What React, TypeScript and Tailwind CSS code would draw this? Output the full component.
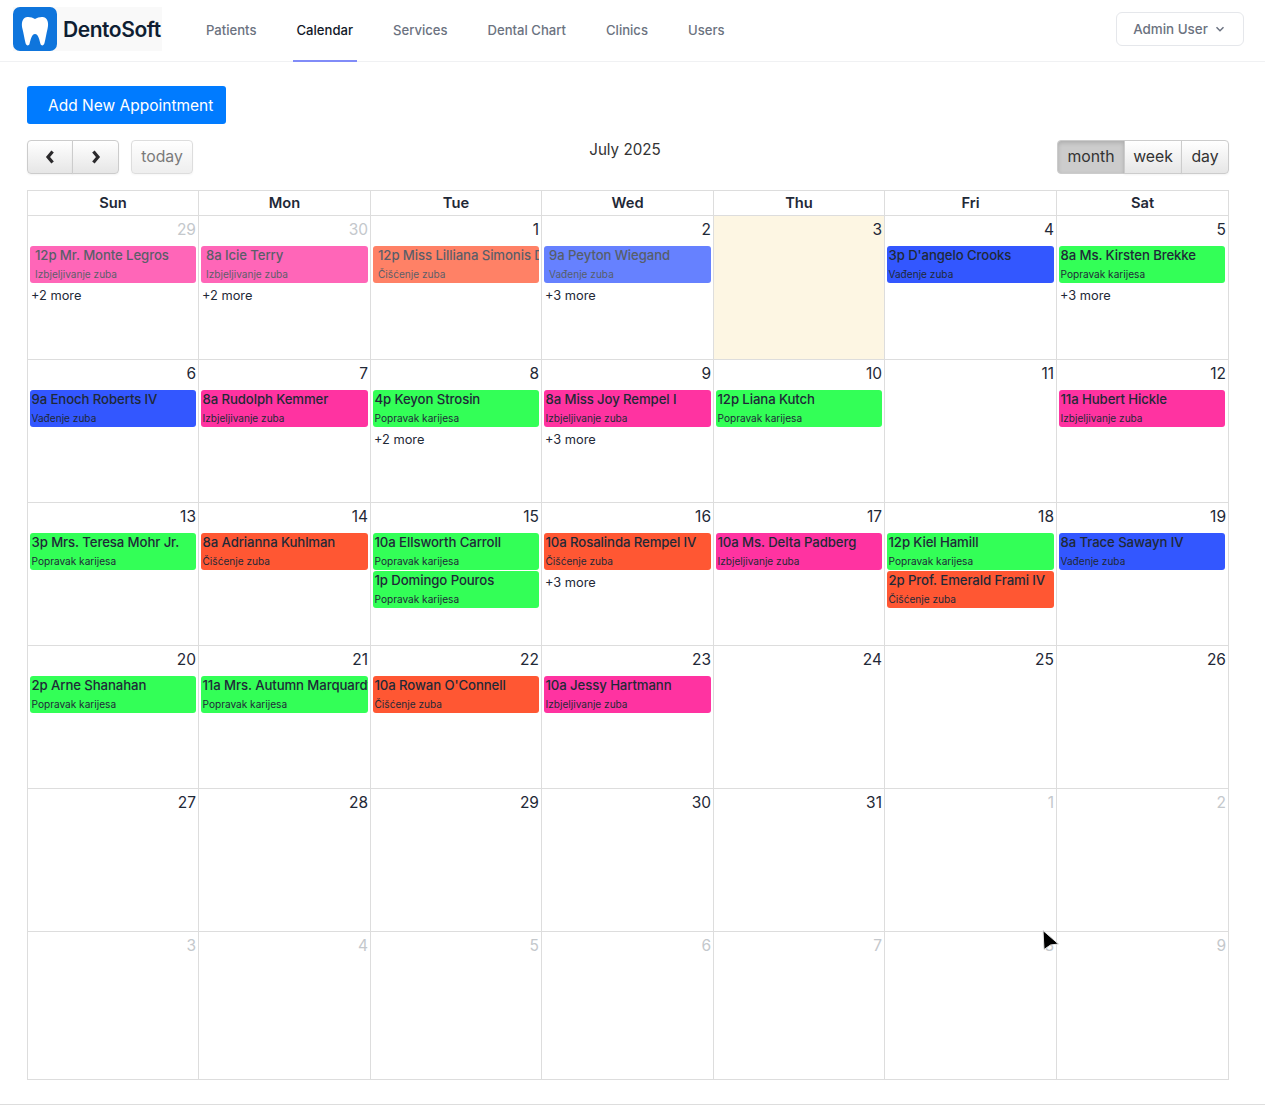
const F = "font-['Inter','Noto_Sans',sans-serif]";

type Ev = { t: string; s: string; c: string };
const P = "Popravak karijesa", I = "Izbjeljivanje zuba", V = "Vađenje zuba", C = "Čišćenje zuba";
const G = "bg-[#33ff57]", R = "bg-[#ff5733]", B = "bg-[#3357ff]", K = "bg-[#ff33a1]";
type Cell = { d: number; o?: boolean; past?: boolean; today?: boolean; e?: Ev[]; more?: string };

const rows: { h: string; cells: Cell[] }[] = [
  { h: "h-[144px]", cells: [
    { d: 29, o: true, past: true, e: [{ t: "12p Mr. Monte Legros", s: I, c: K }], more: "+2 more" },
    { d: 30, o: true, past: true, e: [{ t: "8a Icie Terry", s: I, c: K }], more: "+2 more" },
    { d: 1, past: true, e: [{ t: "12p Miss Lilliana Simonis DDS", s: C, c: R }] },
    { d: 2, past: true, e: [{ t: "9a Peyton Wiegand", s: V, c: B }], more: "+3 more" },
    { d: 3, today: true },
    { d: 4, e: [{ t: "3p D'angelo Crooks", s: V, c: B }] },
    { d: 5, e: [{ t: "8a Ms. Kirsten Brekke", s: P, c: G }], more: "+3 more" },
  ] },
  { h: "h-[143px]", cells: [
    { d: 6, e: [{ t: "9a Enoch Roberts IV", s: V, c: B }] },
    { d: 7, e: [{ t: "8a Rudolph Kemmer", s: I, c: K }] },
    { d: 8, e: [{ t: "4p Keyon Strosin", s: P, c: G }], more: "+2 more" },
    { d: 9, e: [{ t: "8a Miss Joy Rempel I", s: I, c: K }], more: "+3 more" },
    { d: 10, e: [{ t: "12p Liana Kutch", s: P, c: G }] },
    { d: 11 },
    { d: 12, e: [{ t: "11a Hubert Hickle", s: I, c: K }] },
  ] },
  { h: "h-[143px]", cells: [
    { d: 13, e: [{ t: "3p Mrs. Teresa Mohr Jr.", s: P, c: G }] },
    { d: 14, e: [{ t: "8a Adrianna Kuhlman", s: C, c: R }] },
    { d: 15, e: [{ t: "10a Ellsworth Carroll", s: P, c: G }, { t: "1p Domingo Pouros", s: P, c: G }] },
    { d: 16, e: [{ t: "10a Rosalinda Rempel IV", s: C, c: R }], more: "+3 more" },
    { d: 17, e: [{ t: "10a Ms. Delta Padberg", s: I, c: K }] },
    { d: 18, e: [{ t: "12p Kiel Hamill", s: P, c: G }, { t: "2p Prof. Emerald Frami IV", s: C, c: R }] },
    { d: 19, e: [{ t: "8a Trace Sawayn IV", s: V, c: B }] },
  ] },
  { h: "h-[143px]", cells: [
    { d: 20, e: [{ t: "2p Arne Shanahan", s: P, c: G }] },
    { d: 21, e: [{ t: "11a Mrs. Autumn Marquardt", s: P, c: G }] },
    { d: 22, e: [{ t: "10a Rowan O'Connell", s: C, c: R }] },
    { d: 23, e: [{ t: "10a Jessy Hartmann", s: I, c: K }] },
    { d: 24 }, { d: 25 }, { d: 26 },
  ] },
  { h: "h-[143px]", cells: [
    { d: 27 }, { d: 28 }, { d: 29 }, { d: 30 }, { d: 31 }, { d: 1, o: true }, { d: 2, o: true },
  ] },
  { h: "h-[148px]", cells: [
    { d: 3, o: true }, { d: 4, o: true }, { d: 5, o: true }, { d: 6, o: true }, { d: 7, o: true }, { d: 8, o: true }, { d: 9, o: true },
  ] },
];

const COLS = "grid grid-cols-[171px_172px_171px_172px_171px_172px_172px]";
const btn = "h-[34px] pb-[1px] border border-[#ccc] bg-gradient-to-b from-white to-[#e6e6e6] shadow-[0_1px_2px_rgba(0,0,0,0.05),inset_0_1px_0_rgba(255,255,255,0.2)] flex items-center justify-center text-[15.8px] text-[#333]";

function Chevron({ left }: { left?: boolean }) {
  return (
    <svg width="10" height="14" viewBox="0 0 10 14">
      <path d={left ? "M7.600 1.500 L3 7 L7.600 12.500" : "M2.400 1.500 L7 7 L2.400 12.500"} fill="none" stroke="#2b2a2c" strokeWidth="3.200" />
    </svg>
  );
}

function Event({ e, past, last }: { e: Ev; past?: boolean; last?: boolean }) {
  return (
    <div className={`${e.c} ${past ? "opacity-75 pl-[5px]" : "pl-[1.5px]"} ${last ? "mr-[3px]" : "mr-[2px]"} h-[37px] mb-[1px] ml-[2px] rounded-[3px] overflow-hidden whitespace-nowrap text-[#1f2937]`}>
      <div className="text-[13.2px] font-medium leading-[19px] tracking-[-0.1px] text-[#1f2937]">{e.t}</div>
      <div className="text-[10.1px] leading-[18px] text-[#1f2937]">{e.s}</div>
    </div>
  );
}

function Day({ c, last }: { c: Cell; last?: boolean }) {
  return (
    <div className={`border-l border-[#ddd] min-w-0 overflow-hidden ${c.today ? "bg-[#fdf6e3]" : ""}`}>
      <div className={`h-[30px] pr-[2px] pt-[3px] text-right text-[15.5px] leading-[22px] ${c.o ? "text-[#c4c8cc]" : "text-[#1f2937]"}`}>{c.d}</div>
      {c.e?.map((e, i) => <Event key={i} e={e} past={c.past} last={last} />)}
      {c.more && <div className="pl-[3px] pt-[3px] text-[12.8px] leading-[17px] text-[#1f2937]">{c.more}</div>}
    </div>
  );
}

export default function App() {
  return (
    <div className={`${F} bg-white relative min-h-[1105px] text-[#1f2937]`}>
      <nav className="h-[62px] border-b border-[#f0f1f3] flex items-start pl-[13px] pr-[21px]">
        <div className="mt-[7px] w-[149px] h-[44px] bg-[#f9f9f9] flex items-center">
          <svg width="44" height="44" viewBox="0 0 44 44" className="shrink-0">
            <rect width="44" height="44" rx="7" fill="#0f75dc" />
            <path d="M22 12C19 10 14 9 11.500 11C8.500 13.500 8.500 18 9.500 22C10.500 26 11.500 32 12.500 36C13 38.500 15.500 39.500 16.500 37C17.500 33.500 18.500 27 22 27C25.500 27 26.500 33.500 27.500 37C28.500 39.500 31 38.500 31.500 36C32.500 32 33.500 26 34.500 22C35.500 18 35.500 13.500 32.500 11C30 9 25 10 22 12Z" fill="#fff" />
          </svg>
          <span className="ml-[6px] text-[21px] font-semibold leading-none tracking-[-0.45px] text-[#0f1e33]">DentoSoft</span>
        </div>
        <div className="ml-[40px] flex gap-8 h-[62px] text-[13.1px] font-medium text-[#6b7280]">
          {["Patients", "Calendar", "Services", "Dental Chart", "Clinics", "Users"].map((n) => (
            <a key={n} className={`px-1 flex items-center pt-[2px] border-b-2 h-[62px] ${n === "Calendar" ? "border-[#818cf8] text-[#111827]" : "border-transparent"}`}>{n}</a>
          ))}
        </div>
        <div className="ml-auto mt-[12px] w-[128px] h-[34px] border border-[#e5e7eb] rounded-[6px] flex items-center justify-center gap-[7px] pr-[2px] text-[13.4px] font-medium text-[#6b7280]">
          Admin User
          <svg width="10" height="10" viewBox="0 0 10 10"><path d="M1.500 3.200 5 6.700 8.500 3.200" fill="none" stroke="#6b7280" strokeWidth="1.500" /></svg>
        </div>
      </nav>

      <main className="pl-[27px] w-[1229px] pt-[24px]">
        <button className="h-[38px] w-[199px] pl-[21px] pt-[1px] bg-[#007bff] rounded-[3px] text-white text-[15.5px] text-left">Add New Appointment</button>

        <div className="mt-[16px] flex justify-between items-start h-[50px]">
          <div className="flex gap-[12px] w-[300px]">
            <div className="flex">
              <div className={`${btn} w-[46px] rounded-l-[4px]`}><Chevron left /></div>
              <div className={`${btn} w-[47px] -ml-px rounded-r-[4px]`}><Chevron /></div>
            </div>
            <div className={`${btn} w-[62px] rounded-[4px] opacity-65`}>today</div>
          </div>
          <div className="text-[15.2px] leading-[20px] text-[#333] mr-[6px]">July 2025</div>
          <div className="flex w-[300px] justify-end">
            <div className="h-[34px] pb-[1px] w-[68px] border border-[#ccc] rounded-l-[4px] bg-[#ccc] shadow-[inset_0_2px_4px_rgba(0,0,0,0.15)] flex items-center justify-center text-[15.8px] text-[#333]">month</div>
            <div className={`${btn} w-[58px] -ml-px`}>week</div>
            <div className={`${btn} w-[48px] -ml-px rounded-r-[4px]`}>day</div>
          </div>
        </div>

        <div className="w-[1202px] border-r border-b border-[#ddd]">
          <div className={`${COLS} border-t border-[#ddd] h-[25px]`}>
            {["Sun", "Mon", "Tue", "Wed", "Thu", "Fri", "Sat"].map((d) => (
              <div key={d} className="border-l border-[#ddd] text-center text-[14.7px] font-semibold leading-[24px] text-[#1f2937]">{d}</div>
            ))}
          </div>
          {rows.map((r, i) => (
            <div key={i} className={`${COLS} ${r.h} border-t border-[#ddd]`}>
              {r.cells.map((c, j) => <Day key={j} c={c} last={j === 6} />)}
            </div>
          ))}
        </div>
      </main>

      <div className="mt-[24px] border-b border-[#ddd] h-px" />

      <svg className="absolute left-[1041px] top-[929px]" width="19" height="23" viewBox="0 0 19 23">
        <path d="M2 1.500 L3 20.500 L9.500 16 L17.500 15 Z" fill="#000" stroke="#e5e5e5" strokeWidth="1" strokeLinejoin="round" />
      </svg>
    </div>
  );
}
